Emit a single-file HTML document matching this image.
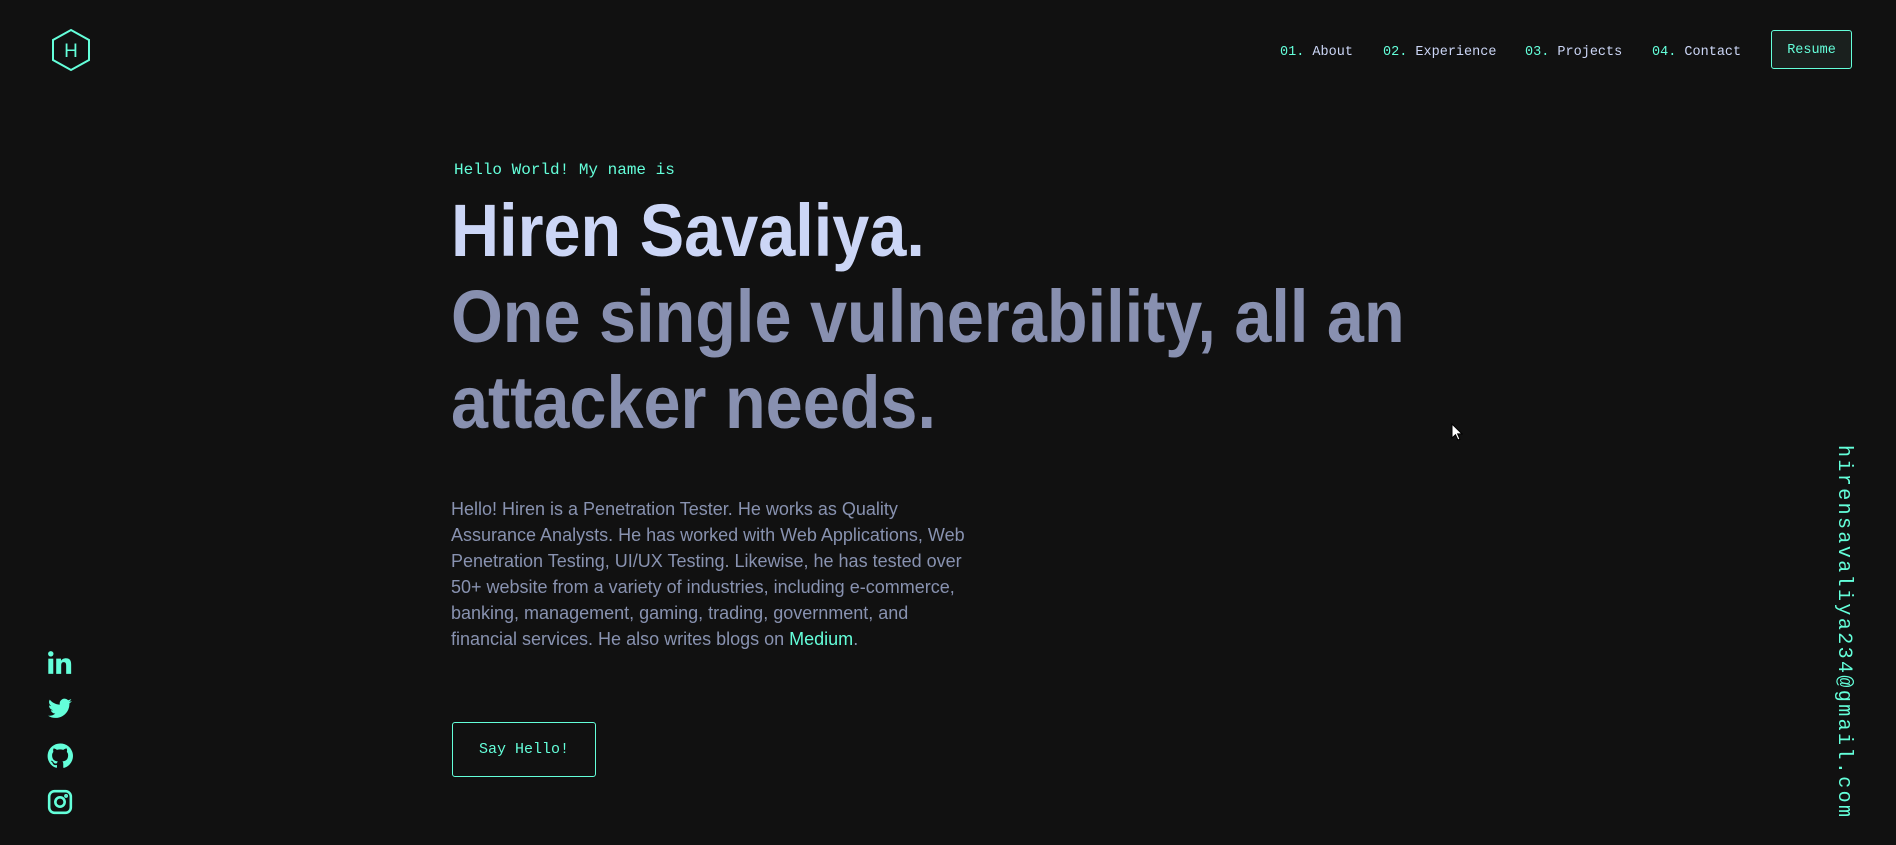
<!DOCTYPE html>
<html><head><meta charset="utf-8"><style>
*{margin:0;padding:0;box-sizing:border-box}
body{width:1896px;height:845px;background:#111111;position:relative;overflow:hidden;font-family:"Liberation Sans",sans-serif}
.mono{font-family:"Liberation Mono",monospace}
.g{color:#64ffda}
.nav{position:absolute;top:45px;font-size:13.5px;color:#ccd6f6;white-space:nowrap}
.nav span{color:#64ffda}
.resume{position:absolute;left:1771px;top:30px;width:81px;height:39px;border:1.5px solid #64ffda;border-radius:3px;background:#1a201e;color:#64ffda;font-size:13.5px;text-align:center;line-height:39px}
.big{position:absolute;left:451px;font-weight:bold;white-space:nowrap;transform-origin:0 0;transform:scaleX(0.9);font-size:74px}
.p{position:absolute;left:451px;top:497px;color:#8892b0;font-size:18px;line-height:25.9px;white-space:nowrap}
.btn{position:absolute;left:452px;top:722px;width:144px;height:55px;border:1.5px solid #64ffda;border-radius:3px;color:#64ffda;font-size:15px;text-align:center;line-height:54px}
.ic{position:absolute;left:47px;width:26px;height:26px}
.email{position:absolute;left:1832px;top:445px;writing-mode:vertical-rl;color:#64ffda;font-size:20px;letter-spacing:2.4px;white-space:nowrap}
</style></head><body>
<svg style="position:absolute;left:51px;top:28px" width="40" height="44" viewBox="0 0 40 44"><polygon points="20,2 38,12 38,32 20,42 2,32 2,12" fill="none" stroke="#64ffda" stroke-width="2"/><text x="20" y="29" text-anchor="middle" fill="#64ffda" font-family="Liberation Sans" font-size="19">H</text></svg>
<div class="nav mono" style="left:1280px"><span>01.</span> About</div>
<div class="nav mono" style="left:1383px"><span>02.</span> Experience</div>
<div class="nav mono" style="left:1525px"><span>03.</span> Projects</div>
<div class="nav mono" style="left:1652px"><span>04.</span> Contact</div>
<div class="resume mono">Resume</div>
<div class="mono g" style="position:absolute;left:454px;top:161px;font-size:16px">Hello World! My name is</div>
<div class="big" style="top:188px;color:#ccd6f6">Hiren Savaliya.</div>
<div class="big" style="top:274px;color:#8890b0">One single vulnerability, all an</div>
<div class="big" style="top:360px;color:#8890b0">attacker needs.</div>
<div class="p">Hello! Hiren is a Penetration Tester. He works as Quality<br>Assurance Analysts. He has worked with Web Applications, Web<br>Penetration Testing, UI/UX Testing. Likewise, he has tested over<br>50+ website from a variety of industries, including e-commerce,<br>banking, management, gaming, trading, government, and<br>financial services. He also writes blogs on <span class="g">Medium</span>.</div>
<div class="btn mono">Say Hello!</div>
<svg class="ic" style="top:650px" viewBox="0 0 24 24" fill="#64ffda"><circle cx="3.5" cy="3.5" r="2.5"/><rect x="1.2" y="8" width="4.6" height="14"/><path d="M8.5 8h4.4v2c.8-1.4 2.4-2.4 4.6-2.4 4 0 4.8 2.6 4.8 6V22h-4.6v-7.2c0-1.8-.1-3.6-2.2-3.6s-2.4 1.6-2.4 3.4V22H8.5z"/></svg>
<svg class="ic" style="top:696px" viewBox="0 0 24 24" fill="#64ffda"><path d="M23 4.6c-.8.4-1.7.6-2.6.7.9-.6 1.6-1.4 2-2.5-.9.5-1.9.9-2.9 1.1a4.5 4.5 0 0 0-7.7 4.1C8 7.8 4.7 6 2.5 3.3a4.5 4.5 0 0 0 1.4 6c-.7 0-1.4-.2-2-.6 0 2.2 1.5 4 3.6 4.4-.7.2-1.4.2-2 .1.6 1.8 2.2 3.1 4.2 3.1A9 9 0 0 1 1 18.2 12.8 12.8 0 0 0 20.7 7.4v-.6c.9-.6 1.7-1.4 2.3-2.2z"/></svg>
<svg class="ic" style="top:743px" viewBox="0 0 24 24" fill="#64ffda"><path d="M12 .5a11.5 11.5 0 0 0-3.6 22.4c.6.1.8-.3.8-.6v-2c-3.2.7-3.9-1.5-3.9-1.5-.5-1.3-1.3-1.7-1.3-1.7-1-.7.1-.7.1-.7 1.2.1 1.8 1.2 1.8 1.2 1 1.8 2.7 1.3 3.4 1 .1-.8.4-1.3.7-1.6-2.6-.3-5.3-1.3-5.3-5.7 0-1.3.5-2.3 1.2-3.1-.1-.3-.5-1.5.1-3.1 0 0 1-.3 3.2 1.2a11 11 0 0 1 5.8 0c2.2-1.5 3.2-1.2 3.2-1.2.6 1.6.2 2.8.1 3.1.8.8 1.2 1.8 1.2 3.1 0 4.4-2.7 5.4-5.3 5.7.4.4.8 1.1.8 2.2v3.2c0 .3.2.7.8.6A11.5 11.5 0 0 0 12 .5z"/></svg>
<svg class="ic" style="top:789px" viewBox="0 0 24 24" fill="none" stroke="#64ffda" stroke-width="2.4"><rect x="2" y="2" width="20" height="20" rx="5"/><circle cx="12" cy="12" r="4.3"/><circle cx="17.6" cy="6.4" r=".6" fill="#64ffda"/></svg>
<div class="email mono">hirensavaliya234@gmail.com</div>
<svg style="position:absolute;left:1451px;top:423px" width="12" height="18" viewBox="0 0 12 18"><path d="M1 1v14l3.5-3.3 2.4 5.3 2-.9-2.3-5.2H11z" fill="#fff" stroke="#000" stroke-width="1"/></svg>
</body></html>
